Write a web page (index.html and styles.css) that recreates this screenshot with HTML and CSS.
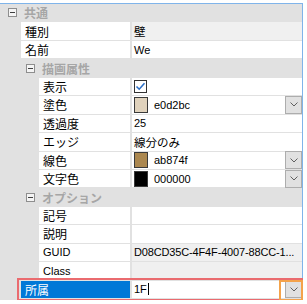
FILE: index.html
```html
<!DOCTYPE html>
<html lang="ja">
<head>
  <meta charset="UTF-8" />
  <title>プロパティ</title>
  <link rel="stylesheet" href="styles.css">
</head>
<body>

  <div class="grid">
    <div class="cat l1"><span class="toggle"></span>共通</div>
    <div class="row l1"><div class="name">種別</div><div class="val ro jp">壁</div></div>
    <div class="row l1"><div class="name">名前</div><div class="val">We</div></div>

    <div class="cat l2"><span class="toggle"></span>描画属性</div>
    <div class="row l2"><div class="name">表示</div>
      <div class="val">
        <span class="check">
          <svg width="11" height="11" viewBox="0 0 11 11"><polyline points="1.5,5.5 4.2,8.2 9.5,2.2" fill="none" stroke="#2b6fc7" stroke-width="1.6"/></svg>
        </span>
      </div>
    </div>
    <div class="row l2"><div class="name">塗色</div>
      <div class="val"><span class="swatch" style="background:#e0d2bc"></span><span class="txt">e0d2bc</span><span class="drop"><svg width="8" height="5" viewBox="0 0 8 5"><polyline points="0.5,0.5 4,4 7.5,0.5" fill="none" stroke="#606060"/></svg></span></div>
    </div>
    <div class="row l2"><div class="name">透過度</div><div class="val">25</div></div>
    <div class="row l2"><div class="name">エッジ</div><div class="val jp">線分のみ</div></div>
    <div class="row l2"><div class="name">線色</div>
      <div class="val"><span class="swatch" style="background:#ab874f"></span><span class="txt">ab874f</span><span class="drop"><svg width="8" height="5" viewBox="0 0 8 5"><polyline points="0.5,0.5 4,4 7.5,0.5" fill="none" stroke="#606060"/></svg></span></div>
    </div>
    <div class="row l2"><div class="name">文字色</div>
      <div class="val"><span class="swatch" style="background:#000000"></span><span class="txt">000000</span><span class="drop"><svg width="8" height="5" viewBox="0 0 8 5"><polyline points="0.5,0.5 4,4 7.5,0.5" fill="none" stroke="#606060"/></svg></span></div>
    </div>

    <div class="cat l2"><span class="toggle"></span>オプション</div>
    <div class="row l2"><div class="name">記号</div><div class="val"></div></div>
    <div class="row l2"><div class="name">説明</div><div class="val"></div></div>
    <div class="row l2"><div class="name lat">GUID</div><div class="val ro"><span class="clip">D08CD35C-4F4F-4007-88CC-1...</span></div></div>
    <div class="row l2"><div class="name lat">Class</div><div class="val ro"></div></div>

    <div class="row l1 picked">
      <div class="name sel">所属</div>
      <div class="val"><span class="caret">1F</span><span class="drop"><svg width="8" height="5" viewBox="0 0 8 5"><polyline points="0.5,0.5 4,4 7.5,0.5" fill="none" stroke="#606060"/></svg></span></div>
      <div class="mark-row"></div>
      <div class="mark-btn"></div>
    </div>
  </div>

</body>
</html>
```

FILE: styles.css
```css
body {
  margin: 0;
  background: #fff;
  font-family: "Liberation Sans", "Noto Sans CJK JP", sans-serif;
  font-size: 11px;
  color: #000;
}

.grid {
  width: 302px;
  margin-top: 3px;
  padding-bottom: 2px;
  background: #e1e1e1;
  border-top: 1px solid #7fb4ea;
  border-right: 1px solid #7fb4ea;
  display: flex;
  flex-direction: column;
  gap: 1px;
}

.cat {
  height: 17.45px;
  display: flex;
  align-items: center;
  font-family: "Noto Sans CJK JP", sans-serif;
  font-size: 12px;
  font-weight: bold;
  color: #a6a6a6;
}

.cat.l1 { padding-left: 8px; }
.cat.l2 { padding-left: 26px; }

.toggle {
  position: relative;
  width: 7px;
  height: 7px;
  border: 1px solid #8e8e8e;
  background: #f4f4f4;
  margin-right: 7px;
}

.toggle::after {
  content: "";
  position: absolute;
  left: 1px;
  top: 3px;
  width: 5px;
  height: 1px;
  background: #404040;
}

.row {
  position: relative;
  height: 17.45px;
  display: flex;
}

.name {
  background: #fff;
  display: flex;
  align-items: center;
  padding-left: 4px;
  font-family: "Noto Sans CJK JP", sans-serif;
  font-size: 12px;
  white-space: nowrap;
}

.name.lat {
  font-family: "Liberation Sans", sans-serif;
  font-size: 11px;
}

.row.l1 .name { margin-left: 21px; width: 105px; }
.row.l2 .name { margin-left: 39px; width: 87px; }

.name.sel {
  background: #0078d7;
  color: #fff;
}

.val {
  flex: 1;
  min-width: 0;
  margin-left: 2px;
  padding-left: 2px;
  background: #fff;
  display: flex;
  align-items: center;
  white-space: nowrap;
}

.val.ro { background: #f0f0f0; }

.val.jp {
  font-family: "Noto Sans CJK JP", sans-serif;
  font-size: 11.5px;
}

.clip {
  overflow: hidden;
  padding-right: 4px;
  letter-spacing: -0.15px;
}

.check {
  width: 11px;
  height: 11px;
  border: 1px solid #333;
  background: #fff;
  display: flex;
}

.swatch {
  width: 12px;
  height: 14px;
  border: 1px solid #3a3a3a;
  margin-right: 6px;
}

.txt { flex: 1; }

.drop {
  width: 15px;
  height: 16px;
  margin-left: auto;
  background: #e1e1e1;
  border: 1px solid #adadad;
  display: flex;
  align-items: center;
  justify-content: center;
}

.caret {
  padding-right: 1px;
  border-right: 1px solid #000;
  line-height: 12px;
}

.mark-row {
  position: absolute;
  left: 17px;
  right: -1px;
  top: -3px;
  bottom: -3px;
  border: 2px solid #ea6b6f;
}

.mark-btn {
  position: absolute;
  left: 279px;
  right: -1px;
  top: -1px;
  bottom: -3px;
  border: 2px solid #f4a34b;
}
```
